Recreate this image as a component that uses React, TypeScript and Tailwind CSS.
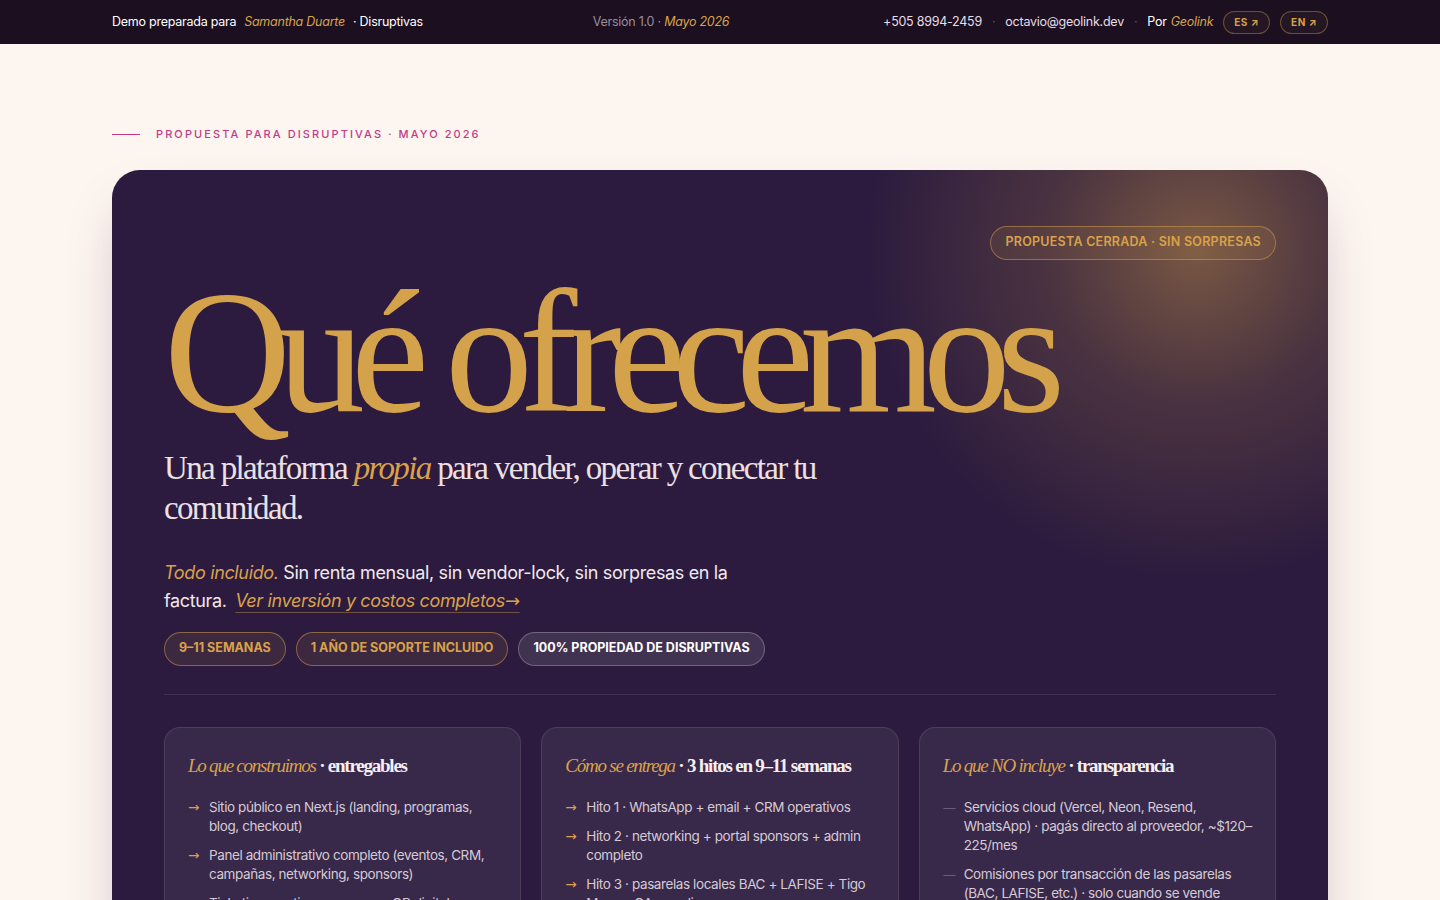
import React from 'react'

const serif = "font-['Liberation_Serif','DejaVu_Serif',serif]"
const sans = "font-['Inter','Liberation_Sans',sans-serif]"

const construimos = [
  'Sitio público en Next.js (landing, programas, blog, checkout)',
  'Panel administrativo completo (eventos, CRM, campañas, networking, sponsors)',
  'Ticketing con tiers y cupones, QR digital por asistente y check-in',
]

const hitos = [
  'Hito 1 · WhatsApp + email + CRM operativos',
  'Hito 2 · networking + portal sponsors + admin completo',
  'Hito 3 · pasarelas locales BAC + LAFISE + Tigo Money, QA y go-live',
]

const noIncluye = [
  'Servicios cloud (Vercel, Neon, Resend, WhatsApp) · pagás directo al proveedor, ~$120–225/mes',
  'Comisiones por transacción de las pasarelas (BAC, LAFISE, etc.) · solo cuando se vende',
]

function TopBar() {
  return (
    <div className={`h-11 bg-[#1b0f20] ${sans} text-[12.5px] tracking-[-0.02em]`}>
      <div className="mx-auto flex h-full max-w-[1216px] items-center justify-between">
        <div className="flex items-center text-white">
          <span>Demo preparada para</span>
          <span className="ml-2 italic text-[#d9a24a]">Samantha Duarte</span>
          <span className="ml-2">· Disruptivas</span>
        </div>
        <div className="pl-4 text-[#9a8e9f]">
          Versión 1.0 · <span className="italic text-[#d9a24a]">Mayo 2026</span>
        </div>
        <div className="flex items-center text-white">
          <span className="text-[#e6dde6]">+505 8994-2459</span>
          <span className="mx-2.5 text-[#5d5068]">·</span>
          <span className="text-[#e6dde6]">octavio@geolink.dev</span>
          <span className="mx-2.5 text-[#5d5068]">·</span>
          <span>Por</span>
          <span className="ml-1 italic text-[#d9a24a]">Geolink</span>
          <span className="ml-2.5 flex h-[23px] items-center rounded-full border border-[#d9a24a]/40 bg-[#d9a24a]/5 px-2.5 text-[10px] font-bold tracking-wider text-[#d9a24a]">
            ES ↗
          </span>
          <span className="ml-2.5 flex h-[23px] items-center rounded-full border border-[#d9a24a]/40 bg-[#d9a24a]/5 px-2.5 text-[10px] font-bold tracking-wider text-[#d9a24a]">
            EN ↗
          </span>
        </div>
      </div>
    </div>
  )
}

function InfoCard({
  kicker,
  title,
  items,
  bullet,
}: {
  kicker: string
  title: string
  items: string[]
  bullet: 'arrow' | 'dash'
}) {
  return (
    <div className="rounded-2xl border border-white/10 bg-white/[0.06] px-[23px] pt-[24px] pb-6">
      <h3 className={`${serif} text-[19px] leading-7 tracking-[-0.065em]`}>
        <span className="italic text-[#d9a24a]">{kicker}</span>
        <span className="font-bold text-[#f6eef0]"> · {title}</span>
      </h3>
      <ul className={`mt-[18px] flex flex-col gap-2.5 ${sans} text-[13.5px] leading-[19px] tracking-[-0.03em] text-[#d6cad6]`}>
        {items.map((it) => (
          <li key={it} className="flex gap-2">
            <span
              className={`w-[13px] shrink-0 font-['DejaVu_Sans',sans-serif] ${
                bullet === 'arrow' ? 'text-[#d9a24a]' : 'text-[#6b5a78]'
              }`}
            >
              {bullet === 'arrow' ? '→' : '—'}
            </span>
            <span>{it}</span>
          </li>
        ))}
      </ul>
    </div>
  )
}

export default function App() {
  return (
    <div className={`min-h-screen bg-[#fdf5f0] ${sans}`}>
      <TopBar />
      <div className="mx-auto max-w-[1216px] pt-[82px] pb-20">
        <div className="flex items-center gap-4">
          <span className="h-px w-7 bg-[#c43a86]" />
          <span className="text-[11px] font-medium tracking-[0.19em] text-[#c43a86]">
            PROPUESTA PARA DISRUPTIVAS · MAYO 2026
          </span>
        </div>

        <section className="mt-[27px] rounded-[28px] bg-[#2c1b3e] bg-[radial-gradient(circle_at_1085px_80px,rgba(212,160,74,0.45)_0px,rgba(212,160,74,0.18)_150px,rgba(212,160,74,0)_330px)] px-[52px] pt-14 pb-16 shadow-[0_30px_60px_-20px_rgba(44,27,62,0.35)]">
          <div className="flex justify-end">
            <span className="flex h-[34px] items-center rounded-full border border-[#d9a24a]/50 bg-[#d9a24a]/10 px-[14px] text-[12.5px] font-semibold tracking-[0.02em] text-[#d9a24a]">
              PROPUESTA CERRADA · SIN SORPRESAS
            </span>
          </div>

          <h1 className={`${serif} mt-[4px] text-[176px] leading-[176px] tracking-[-0.08em] text-[#d4a24a]`}>
            Qué ofrecemos
          </h1>

          <p className={`${serif} mt-[8px] max-w-[680px] text-[33px] leading-[40px] tracking-[-0.05em] text-[#ece0e2]`}>
            Una plataforma <span className="italic text-[#d9a24a]">propia</span> para vender, operar y conectar tu comunidad.
          </p>

          <p className="mt-[31px] max-w-[590px] text-[18px] leading-[28px] tracking-[-0.02em] text-[#f1e9ee]">
            <span className="italic text-[#d9a24a]">Todo incluido.</span> Sin renta mensual, sin vendor-lock, sin sorpresas en la factura.{' '}
            <a className="ml-1 italic text-[#d9a24a] underline decoration-[#d9a24a]/40 decoration-1 underline-offset-[5px]">
              Ver inversión y costos completos<span className="not-italic font-['DejaVu_Sans',sans-serif]">→</span>
            </a>
          </p>

          <div className="mt-[17px] flex gap-2.5">
            <span className="flex h-[34px] items-center rounded-full border border-[#d9a24a]/50 bg-[#d9a24a]/10 px-[14px] text-[12.5px] font-bold text-[#d9a24a]">
              9–11 SEMANAS
            </span>
            <span className="flex h-[34px] items-center rounded-full border border-[#d9a24a]/50 bg-[#d9a24a]/10 px-[14px] text-[12.5px] font-bold text-[#d9a24a]">
              1 AÑO DE SOPORTE INCLUIDO
            </span>
            <span className="flex h-[34px] items-center rounded-full border border-white/25 bg-white/10 px-[14px] text-[12.5px] font-bold text-white">
              100% PROPIEDAD DE DISRUPTIVAS
            </span>
          </div>

          <div className="mt-7 h-px bg-white/10" />

          <div className="mt-8 grid grid-cols-3 gap-5">
            <InfoCard kicker="Lo que construimos" title="entregables" items={construimos} bullet="arrow" />
            <InfoCard kicker="Cómo se entrega" title="3 hitos en 9–11 semanas" items={hitos} bullet="arrow" />
            <InfoCard kicker="Lo que NO incluye" title="transparencia" items={noIncluye} bullet="dash" />
          </div>
        </section>
      </div>
    </div>
  )
}
